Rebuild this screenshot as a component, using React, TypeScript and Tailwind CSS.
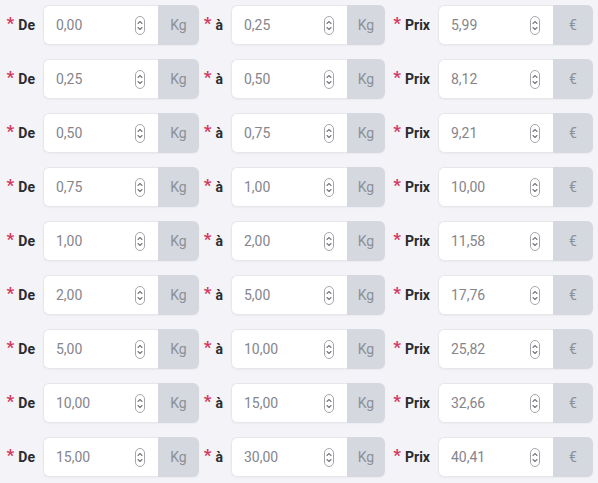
const rows: [string, string, string][] = [
  ['0,00', '0,25', '5,99'],
  ['0,25', '0,50', '8,12'],
  ['0,50', '0,75', '9,21'],
  ['0,75', '1,00', '10,00'],
  ['1,00', '2,00', '11,58'],
  ['2,00', '5,00', '17,76'],
  ['5,00', '10,00', '25,82'],
  ['10,00', '15,00', '32,66'],
  ['15,00', '30,00', '40,41'],
];

function Spinner() {
  return (
    <svg width="10" height="19" viewBox="0 0 10 19" fill="none" className="shrink-0">
      <rect x="0.5" y="0.5" width="9" height="18" rx="4.5" stroke="#a5a5ab" strokeWidth="1" />
      <path d="M3 7.5 L5 5.5 L7 7.5" stroke="#77777d" strokeWidth="1.1" strokeLinecap="round" strokeLinejoin="round" />
      <path d="M3 11.5 L5 13.5 L7 11.5" stroke="#77777d" strokeWidth="1.1" strokeLinecap="round" strokeLinejoin="round" />
    </svg>
  );
}

function Field({ label, labelW, value, inputW, unit, unitW }: {
  label: string; labelW: string; value: string; inputW: string; unit: string; unitW: string;
}) {
  return (
    <div className="flex items-center">
      <div className={`${labelW} flex items-center justify-end pr-2 text-[14px] font-bold text-[#2b2b2f]`}>
        <span className="text-[17px] leading-none text-[#d23a5f] mr-1 -mt-[3px]">*</span>
        <span>{label}</span>
      </div>
      <div className="flex h-10 rounded-md shadow-[0_1px_2px_rgba(0,0,0,0.04)]">
        <div className={`${inputW} flex items-center justify-between bg-white border border-[#e6e6ec] border-r-0 rounded-l-md pl-3 pr-[13px]`}>
          <span className="text-[14px] text-[#85858c]">{value}</span>
          <Spinner />
        </div>
        <div className={`${unitW} flex items-center justify-center bg-[#d5d8de] rounded-r-md text-[14px] text-[#8b9099]`}>
          {unit}
        </div>
      </div>
    </div>
  );
}

export default function App() {
  return (
    <div className="w-[598px] h-[483px] bg-[#f3f3f8] pt-[5px] flex flex-col gap-[14px]" style={{ fontFamily: 'Roboto, "Liberation Sans", sans-serif' }}>
      {rows.map(([from, to, price], i) => (
        <div key={i} className="flex items-center">
          <Field label="De" labelW="w-[43px]" value={from} inputW="w-[115px]" unit="Kg" unitW="w-[41px]" />
          <Field label="à" labelW="w-[32px]" value={to} inputW="w-[116px]" unit="Kg" unitW="w-[38px]" />
          <Field label="Prix" labelW="w-[53px]" value={price} inputW="w-[115px]" unit="€" unitW="w-[40px]" />
        </div>
      ))}
    </div>
  );
}
